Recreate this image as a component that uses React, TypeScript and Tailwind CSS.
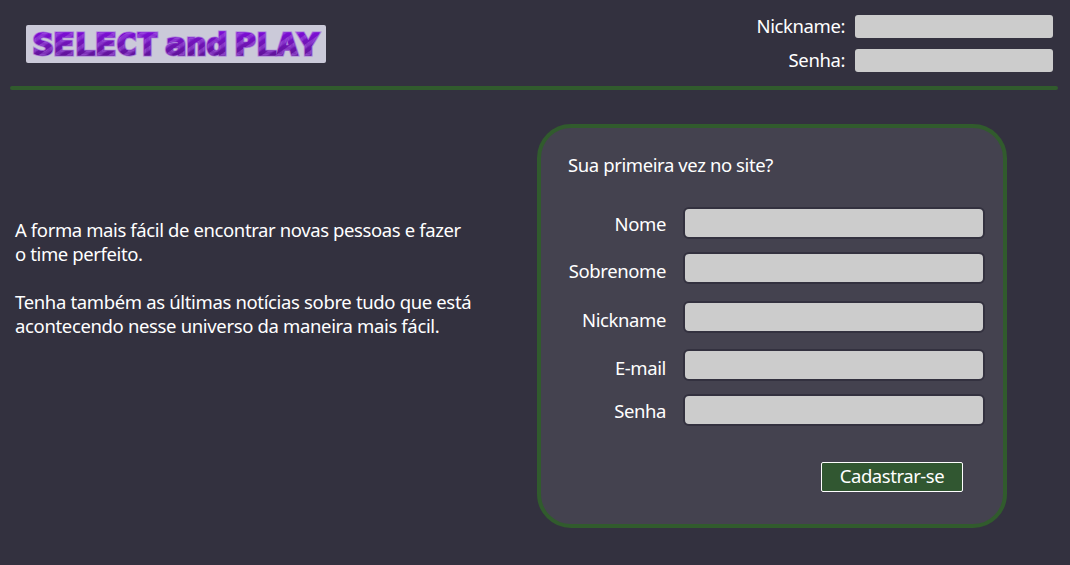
const logoLayers = [
  { fill: "#ab7fdb", stroke: "#ab7fdb", width: 3 },
  { fill: "url(#fade)", stroke: "url(#fade)", width: 1.3 },
  { fill: "url(#stripes)", stroke: "url(#stripes)", width: 1.3 },
];

function Logo() {
  return (
    <div className="h-[38px] w-[300px] overflow-hidden rounded-[2px] bg-[#cbcad9]">
      <svg width="300" height="38" viewBox="0 0 300 38" role="img" aria-label="SELECT and PLAY">
        <defs>
          <linearGradient id="fade" x1="0" y1="7" x2="0" y2="31" gradientUnits="userSpaceOnUse">
            <stop offset="0" stopColor="#7d0cd8" />
            <stop offset="0.5" stopColor="#7014b5" />
            <stop offset="1" stopColor="#601398" />
          </linearGradient>
          <pattern id="stripes" width="8" height="300" patternUnits="userSpaceOnUse" patternTransform="rotate(55)">
            <rect width="3.5" height="300" fill="#a863e0" fillOpacity="0.4" />
          </pattern>
        </defs>
        {logoLayers.map((layer, i) => (
          <g
            key={layer.fill}
            fill={layer.fill}
            stroke={layer.stroke}
            strokeWidth={layer.width}
            strokeLinejoin="miter"
            fontFamily="'DejaVu Sans Mono', monospace"
            fontWeight="700"
            fontSize="29.5"
            aria-hidden={i > 0}
          >
            <text x="6.5" y="29.7" textLength="125" lengthAdjust="spacingAndGlyphs">SELECT</text>
            <text x="139" y="29.7" textLength="62" lengthAdjust="spacingAndGlyphs">and</text>
            <text x="208.5" y="29.7" textLength="84" lengthAdjust="spacingAndGlyphs">PLAY</text>
          </g>
        ))}
      </svg>
    </div>
  );
}

const fields = [
  { label: "Nome", type: "text", gap: "mt-0", shift: "pt-0.5" },
  { label: "Sobrenome", type: "text", gap: "mt-[13px]", shift: "pt-1.5" },
  { label: "Nickname", type: "text", gap: "mt-[17px]", shift: "pt-1.5" },
  { label: "E-mail", type: "email", gap: "mt-4", shift: "pt-1.5" },
  { label: "Senha", type: "password", gap: "mt-[13px]", shift: "pt-0.5" },
];

function LoginField({ label, type }: { label: string; type: string }) {
  return (
    <label className="flex h-[23px] items-center justify-end gap-[10px]">
      <span className="pb-0.5">{label}</span>
      <input type={type} className="h-[23px] w-[198px] rounded-[3px] bg-[#cccccc] px-2 text-black outline-none" />
    </label>
  );
}

export default function App() {
  return (
    <div className="h-[565px] w-[1070px] overflow-hidden bg-[#33313f] font-['Noto_Sans',sans-serif] text-[18.5px] leading-6 tracking-[-0.4px] text-white">
      <header className="flex h-[86px] justify-between pr-[17px] pl-[26px]">
        <div className="pt-[25px]">
          <Logo />
        </div>
        <form className="flex flex-col gap-[11px] pt-[15px]">
          <LoginField label="Nickname:" type="text" />
          <LoginField label="Senha:" type="password" />
        </form>
      </header>
      <div className="mr-3 ml-[10px] h-1 rounded-full bg-[#315b2d]" />
      <main className="flex pt-[34px]">
        <section className="w-[537px] pt-[94px] pl-[15px] whitespace-nowrap">
          <p className="tracking-[-0.39px]">
            A forma mais fácil de encontrar novas pessoas e fazer
            <br />o time perfeito.
          </p>
          <p className="mt-6 tracking-[-0.35px]">
            Tenha também as últimas notícias sobre tudo que está
            <br />
            acontecendo nesse universo da maneira mais fácil.
          </p>
        </section>
        <form className="h-[404px] w-[470px] rounded-[34px] border-4 border-[#315b2d] bg-[#44424f] pt-[25px] pr-[18px]">
          <h2 className="pl-[27px]">Sua primeira vez no site?</h2>
          <div className="pt-[30px]">
            {fields.map((f) => (
              <label key={f.label} className={`flex h-8 items-center justify-end gap-[17px] ${f.gap}`}>
                <span className={f.shift}>{f.label}</span>
                <input
                  type={f.type}
                  className="h-8 w-[302px] rounded-md border-2 border-[#33313f] bg-[#cccccc] px-2 text-black outline-none"
                />
              </label>
            ))}
          </div>
          <div className="flex justify-end pt-9 pr-[22px]">
            <button
              type="button"
              className="flex h-[30px] w-[142px] items-center justify-center rounded-[2px] border border-white bg-[#315731] pb-0.5 tracking-[-0.45px]"
            >
              Cadastrar-se
            </button>
          </div>
        </form>
      </main>
    </div>
  );
}
